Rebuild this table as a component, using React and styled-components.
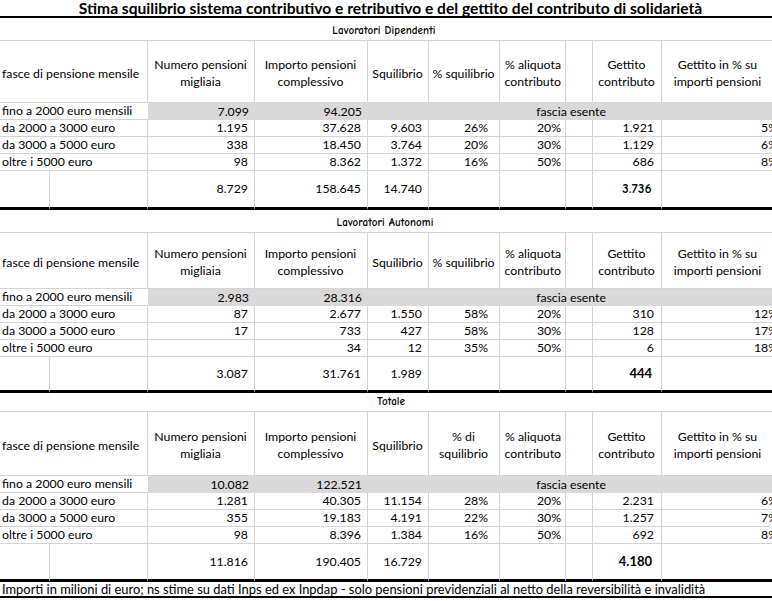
import React from 'react';
import styled, { createGlobalStyle } from 'styled-components';

const GRID = '#d4d4d4';
const FILL = '#d9d9d9';
const BODY_FONT = `Lato, "Open Sans", sans-serif`;
const COMIC_FONT = `"Comic Sans MS", "Comic Neue", Lato, sans-serif`;

const Global = createGlobalStyle`
  html, body { margin: 0; padding: 0; background: #fff; }
  body { width: 772px; height: 601px; overflow: hidden; }
`;

const COLS = [50, 98, 107, 113, 61, 71, 66, 27, 69, 120];

const Sheet = styled.table`
  width: 782px;
  table-layout: fixed;
  border-collapse: separate;
  border-spacing: 0;
  font-family: ${BODY_FONT};
  font-size: 12.3px;
  color: #000;
`;

const Row = styled.tr`
  height: ${(p) => p.$h}px;
`;

const Cell = styled.td`
  box-sizing: border-box;
  padding: 0 ${(p) => p.$pr ?? 3}px 0 ${(p) => p.$pl ?? 2}px;
  text-align: ${(p) => p.$align || 'left'};
  vertical-align: ${(p) => p.$valign || 'bottom'};
  white-space: nowrap;
  overflow: hidden;
  line-height: 16px;
  background: ${(p) => (p.$fill ? FILL : 'transparent')};
  border-right: ${(p) => (p.$right ? `1px solid ${GRID}` : 'none')};
  border-bottom: ${(p) =>
    p.$bottom === 'thick'
      ? '3px solid #000'
      : p.$bottom === 'mid'
      ? '2px solid #000'
      : p.$bottom === 'none'
      ? 'none'
      : `1px solid ${GRID}`};
`;

const TitleCell = styled(Cell)`
  font-weight: 700;
  font-size: 15.6px;
  line-height: 16px;
  text-align: center;
  vertical-align: middle;
`;

const SectionCell = styled(Cell)`
  font-family: ${COMIC_FONT};
  font-weight: 700;
  font-size: 11px;
  letter-spacing: 0.1px;
  text-align: center;
  padding-bottom: 2px;
  line-height: 14px;
`;

const HeadCell = styled(Cell)`
  vertical-align: middle;
  padding-top: 3px;
  line-height: 17px;
`;

const FootCell = styled(Cell)`
  font-size: 12.9px;
  vertical-align: middle;
  line-height: 14px;
`;

const TotalValue = styled.span`
  font-weight: 700;
  font-family: ${(p) => (p.$comic ? COMIC_FONT : BODY_FONT)};
  font-size: 13px;
  letter-spacing: ${(p) => (p.$comic ? '0.4px' : '0')};
`;

const Line = styled.div``;

const VAL_PAD = [6, 6, 6, 11, 4, 3, 7, 3];

const sections = [
  {
    title: 'Lavoratori Dipendenti',
    titleShift: 16,
    titleH: 23,
    headH: 62,
    totalH: 39,
    pctHead: ['% squilibrio'],
    first: ['7.099', '94.205'],
    rows: [
      ['da 2000 a 3000 euro', '1.195', '37.628', '9.603', '26%', '20%', '', '1.921', '5%'],
      ['da 3000 a 5000 euro', '338', '18.450', '3.764', '20%', '30%', '', '1.129', '6%'],
      ['oltre i 5000 euro', '98', '8.362', '1.372', '16%', '50%', '', '686', '8%'],
    ],
    total: ['8.729', '158.645', '14.740'],
    gettito: '3.736',
    comic: true,
  },
  {
    title: 'Lavoratori Autonomi',
    titleShift: 14,
    titleH: 23,
    headH: 56,
    totalH: 36,
    pctHead: ['% squilibrio'],
    first: ['2.983', '28.316'],
    rows: [
      ['da 2000 a 3000 euro', '87', '2.677', '1.550', '58%', '20%', '', '310', '12%'],
      ['da 3000 a 5000 euro', '17', '733', '427', '58%', '30%', '', '128', '17%'],
      ['oltre i 5000 euro', '', '34', '12', '35%', '50%', '', '6', '18%'],
    ],
    total: ['3.087', '31.761', '1.989'],
    gettito: '444',
    comic: false,
  },
  {
    title: 'Totale',
    titleShift: 2,
    titleH: 19,
    headH: 64,
    totalH: 38,
    pctHead: ['% di', 'squilibrio'],
    first: ['10.082', '122.521'],
    rows: [
      ['da 2000 a 3000 euro', '1.281', '40.305', '11.154', '28%', '20%', '', '2.231', '6%'],
      ['da 3000 a 5000 euro', '355', '19.183', '4.191', '22%', '30%', '', '1.257', '7%'],
      ['oltre i 5000 euro', '98', '8.396', '1.384', '16%', '50%', '', '692', '8%'],
    ],
    total: ['11.816', '190.405', '16.729'],
    gettito: '4.180',
    comic: false,
  },
];

const Lines = ({ items }) => items.map((t) => <Line key={t}>{t}</Line>);

function Section({ s }) {
  return (
    <>
      <Row $h={s.titleH}>
        <SectionCell colSpan={10} $pr={s.titleShift}>{s.title}</SectionCell>
      </Row>
      <Row $h={s.headH}>
        <HeadCell colSpan={2} $right>fasce di pensione mensile</HeadCell>
        <HeadCell $align="center" $right><Lines items={['Numero pensioni', 'migliaia']} /></HeadCell>
        <HeadCell $align="center" $right><Lines items={['Importo pensioni', 'complessivo']} /></HeadCell>
        <HeadCell $align="center" $right>Squilibrio</HeadCell>
        <HeadCell $align="center" $right><Lines items={s.pctHead} /></HeadCell>
        <HeadCell $align="right" $pr={4} $right><Lines items={['% aliquota', 'contributo']} /></HeadCell>
        <HeadCell $right />
        <HeadCell $align="center" $right><Lines items={['Gettito', 'contributo']} /></HeadCell>
        <HeadCell $align="center" $pr={10} $right><Lines items={['Gettito in % su', 'importi pensioni']} /></HeadCell>
      </Row>
      <Row $h={17}>
        <Cell colSpan={2}>fino a 2000 euro mensili</Cell>
        <Cell $fill $bottom="none" $align="right" $pr={VAL_PAD[0]}>{s.first[0]}</Cell>
        <Cell $fill $bottom="none" $align="right" $pr={VAL_PAD[1]}>{s.first[1]}</Cell>
        <Cell $fill $bottom="none" colSpan={6} $align="center" $pl={0} $pr={8}>fascia esente</Cell>
      </Row>
      {s.rows.map((r) => (
        <Row $h={17} key={r[0]}>
          <Cell colSpan={2} $right>{r[0]}</Cell>
          {r.slice(1).map((v, i) => (
            <Cell key={i} $align="right" $pr={VAL_PAD[i]} $right>{v}</Cell>
          ))}
        </Row>
      ))}
      <Row $h={s.totalH}>
        <Cell $right $bottom="thick" />
        <Cell $right $bottom="thick" />
        {s.total.map((v, i) => (
          <Cell key={i} $valign="middle" $align="right" $pr={VAL_PAD[i]} $right $bottom="thick">{v}</Cell>
        ))}
        <Cell $right $bottom="thick" />
        <Cell $right $bottom="thick" />
        <Cell $right $bottom="thick" />
        <Cell $valign="middle" $align="right" $pr={9} $right $bottom="thick">
          <TotalValue $comic={s.comic}>{s.gettito}</TotalValue>
        </Cell>
        <Cell $right $bottom="thick" />
      </Row>
    </>
  );
}

export default function App() {
  return (
    <>
      <Global />
      <Sheet>
        <colgroup>
          {COLS.map((w, i) => (
            <col key={i} style={{ width: w }} />
          ))}
        </colgroup>
        <tbody>
          <Row $h={18}>
            <TitleCell colSpan={10} $bottom="mid">
              Stima squilibrio sistema contributivo e retributivo e del gettito del contributo di solidarietà
            </TitleCell>
          </Row>
          {sections.map((s) => (
            <Section s={s} key={s.title} />
          ))}
          <Row $h={15}>
            <FootCell colSpan={10} $bottom="mid">
              Importi in milioni di euro; ns stime su dati Inps ed ex Inpdap - solo pensioni previdenziali al netto della reversibilità e invalidità
            </FootCell>
          </Row>
        </tbody>
      </Sheet>
    </>
  );
}
